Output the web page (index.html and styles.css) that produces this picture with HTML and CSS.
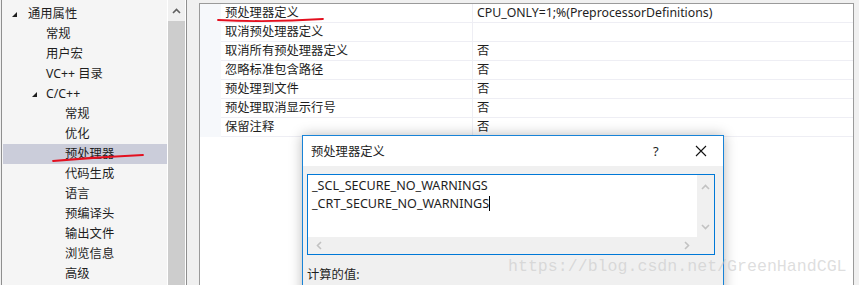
FILE: index.html
```html
<!DOCTYPE html>
<html lang="zh-CN">
<head>
    <meta charset="UTF-8">
    <title>属性页</title>
    <link rel="stylesheet" href="styles.css">
</head>
<body>
    <div class="page">
        <div class="tree">
            <ul class="tree-list">
                <li class="node lvl0"><span class="twisty"></span>通用属性</li>
                <li class="node lvl1">常规</li>
                <li class="node lvl1">用户宏</li>
                <li class="node lvl1">VC++ 目录</li>
                <li class="node lvl1 parent"><span class="twisty"></span>C/C++</li>
                <li class="node lvl2">常规</li>
                <li class="node lvl2">优化</li>
                <li class="node lvl2 selected">预处理器</li>
                <li class="node lvl2">代码生成</li>
                <li class="node lvl2">语言</li>
                <li class="node lvl2">预编译头</li>
                <li class="node lvl2">输出文件</li>
                <li class="node lvl2">浏览信息</li>
                <li class="node lvl2">高级</li>
            </ul>
            <div class="vscroll">
                <div class="vscroll-btn">
                    <svg width="9" height="6" viewBox="0 0 9 6"><polyline points="1,5 4.5,1.5 8,5" fill="none" stroke="#606060" stroke-width="1.6"/></svg>
                </div>
                <div class="vscroll-thumb"></div>
            </div>
        </div>

        <div class="splitter"></div>

        <div class="grid">
            <div class="row"><div class="name">预处理器定义</div><div class="value">CPU_ONLY=1;%(PreprocessorDefinitions)</div></div>
            <div class="row"><div class="name">取消预处理器定义</div><div class="value"></div></div>
            <div class="row"><div class="name">取消所有预处理器定义</div><div class="value">否</div></div>
            <div class="row"><div class="name">忽略标准包含路径</div><div class="value">否</div></div>
            <div class="row"><div class="name">预处理到文件</div><div class="value">否</div></div>
            <div class="row"><div class="name">预处理取消显示行号</div><div class="value">否</div></div>
            <div class="row"><div class="name">保留注释</div><div class="value">否</div></div>
        </div>

        <div class="dialog">
            <div class="dialog-title">
                <span class="dialog-caption">预处理器定义</span>
                <span class="dialog-help">?</span>
                <span class="dialog-close">
                    <svg width="12" height="12" viewBox="0 0 12 12"><path d="M1 1 L11 11 M11 1 L1 11" stroke="#111" stroke-width="1.1"/></svg>
                </span>
            </div>
            <div class="dialog-body">
                <div class="editbox">
                    <div class="edit-main">
                        <div class="edit-text">
                            <div>_SCL_SECURE_NO_WARNINGS</div>
                            <div>_CRT_SECURE_NO_WARNINGS<span class="caret"></span></div>
                        </div>
                        <div class="edit-vbar">
                            <svg width="9" height="6" viewBox="0 0 9 6"><polyline points="1,5 4.5,1.5 8,5" fill="none" stroke="#c2c2c2" stroke-width="1.6"/></svg>
                            <svg width="9" height="6" viewBox="0 0 9 6"><polyline points="1,1 4.5,4.5 8,1" fill="none" stroke="#c2c2c2" stroke-width="1.6"/></svg>
                        </div>
                    </div>
                    <div class="edit-hbar">
                        <svg width="6" height="9" viewBox="0 0 6 9"><polyline points="5,1 1.5,4.5 5,8" fill="none" stroke="#c2c2c2" stroke-width="1.6"/></svg>
                        <svg width="6" height="9" viewBox="0 0 6 9"><polyline points="1,1 4.5,4.5 1,8" fill="none" stroke="#c2c2c2" stroke-width="1.6"/></svg>
                        <span class="corner"></span>
                    </div>
                </div>
                <div class="computed">计算的值:</div>
            </div>
        </div>

        <div class="watermark">https://blog.csdn.net/GreenHandCGL</div>

        <svg class="marks" width="859" height="285" viewBox="0 0 859 285">
            <path d="M53 161 Q98 157 143 155" fill="none" stroke="#e3101f" stroke-width="1.8" stroke-linecap="round"/>
            <path d="M218 20 Q270 22.5 323 19" fill="none" stroke="#e3101f" stroke-width="1.8" stroke-linecap="round"/>
        </svg>
    </div>
</body>
</html>
```

FILE: styles.css
```css
body {
    margin: 0;
    padding: 0;
    background-color: #f0f0f0;
    font-family: "Noto Sans", "Noto Sans CJK SC", sans-serif;
    font-size: 12.3px;
    color: #1e1e1e;
}
.page {
    position: relative;
    width: 859px;
    height: 285px;
    overflow: hidden;
    display: flex;
    align-items: flex-start;
    padding-left: 1px;
    box-sizing: border-box;
}

/* left tree */
.tree {
    width: 186px;
    height: 285px;
    box-sizing: border-box;
    border-left: 1px solid #8f8f8f;
    border-right: 1px solid #8f8f8f;
    background-color: #f5f5f5;
    display: flex;
}
.tree-list {
    list-style: none;
    margin: 0;
    padding: 4px 0 0 1px;
    width: 166px;
}
.node {
    height: 20px;
    line-height: 20px;
    white-space: nowrap;
    position: relative;
}
.lvl0 { padding-left: 25px; }
.lvl1 { padding-left: 43px; }
.lvl2 { padding-left: 62px; }
.selected { background-color: #cbcdda; }
.twisty {
    position: absolute;
    top: 8px;
    width: 0;
    height: 0;
    border-left: 5px solid transparent;
    border-bottom: 5px solid #1e1e1e;
}
.lvl0 .twisty { left: 9px; }
.parent .twisty { left: 29px; }
.vscroll {
    width: 17px;
    display: flex;
    flex-direction: column;
    border-left: 1px solid #fff;
    border-right: 1px solid #fff;
}
.vscroll-btn {
    height: 21px;
    display: flex;
    justify-content: center;
    align-items: center;
    background-color: #f0f0f0;
}
.vscroll-thumb {
    flex: 1;
    background-color: #cdcdcd;
}

.splitter {
    width: 12px;
}

/* property grid */
.grid {
    width: 655px;
    height: 290px;
    margin-top: 3px;
    box-sizing: border-box;
    border: 1px solid #9a9a9a;
    background-color: #fff;
}
.row {
    display: flex;
    height: 19px;
    box-sizing: border-box;
    border-bottom: 1px solid #eeeef4;
    margin-left: 21px;
    line-height: 18px;
    position: relative;
}
.row::before {
    content: "";
    position: absolute;
    left: -21px;
    top: 0;
    bottom: -1px;
    width: 21px;
    background-color: #f6f8fb;
}
.name {
    width: 252px;
    padding-left: 4px;
    border-right: 1px solid #eeeef4;
    box-sizing: border-box;
}
.value {
    flex: 1;
    padding-left: 4px;
}

/* dialog */
.dialog {
    position: absolute;
    left: 302px;
    top: 135px;
    width: 422px;
    height: 170px;
    box-sizing: border-box;
    border: 1px solid #1883d7;
    background-color: #f0f0f0;
    box-shadow: 0 0 12px rgba(0, 0, 0, 0.28);
}
.dialog-title {
    height: 30px;
    background-color: #fff;
    display: flex;
    align-items: center;
    padding-left: 8px;
}
.dialog-caption {
    flex: 1;
}
.dialog-help {
    width: 12px;
    margin-right: 30px;
    font-size: 13px;
}
.dialog-close {
    width: 12px;
    margin-right: 16px;
    display: flex;
}
.dialog-body {
    padding: 8px 8px 0 4px;
}
.editbox {
    width: 408px;
    height: 81px;
    box-sizing: border-box;
    border: 1px solid #0078d7;
    display: flex;
    flex-direction: column;
}
.edit-main {
    flex: 1;
    display: flex;
}
.edit-text {
    flex: 1;
    background-color: #fff;
    padding: 2px 0 0 4px;
    line-height: 17.5px;
    font-size: 12.6px;
}
.caret {
    display: inline-block;
    width: 1px;
    height: 15px;
    background-color: #000;
    vertical-align: -3px;
}
.edit-vbar {
    width: 17px;
    background-color: #f0f0f0;
    display: flex;
    flex-direction: column;
    align-items: center;
    justify-content: space-between;
    padding: 9px 0 7px;
    box-sizing: border-box;
}
.edit-hbar {
    height: 17px;
    background-color: #f0f0f0;
    display: flex;
    align-items: center;
    padding-left: 8px;
}
.edit-hbar svg:nth-child(2) {
    margin-left: auto;
    margin-right: 7px;
}
.corner {
    width: 17px;
}
.computed {
    margin-top: 12px;
    line-height: 16px;
}

.watermark {
    position: absolute;
    left: 508px;
    top: 257px;
    font-family: "Liberation Mono", monospace;
    font-size: 16.6px;
    line-height: 20px;
    color: rgba(200, 200, 200, 0.6);
    white-space: nowrap;
}
.marks {
    position: absolute;
    left: 0;
    top: 0;
    pointer-events: none;
}
```
